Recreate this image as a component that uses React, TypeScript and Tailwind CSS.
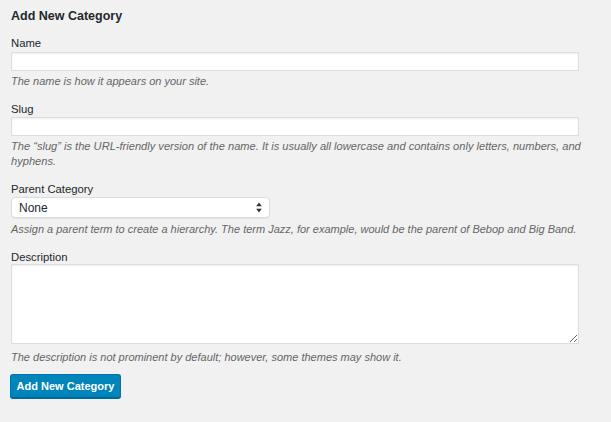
import React from "react";

const App: React.FC = () => {
  return (
    <div className="min-h-[422px] w-[611px] bg-[#f1f1f1] px-[11px] pt-[9px] font-['Liberation_Sans',Arial,sans-serif] text-[#23282d]">
      {/* Título */}
      <h2 className="text-[12.5px] font-bold leading-[14px]">Add New Category</h2>

      {/* Nombre */}
      <div className="mt-[13px]">
        <label className="block text-[11.3px] leading-[15px]">Name</label>
        <input type="text" className="mt-[1px] block h-[19px] w-[568px] border border-[#dddddd] bg-white shadow-[inset_0_1px_2px_rgba(0,0,0,0.07)] outline-none" />
        <p className="mt-[3px] text-[11px] italic leading-[14px] text-[#666666]">The name is how it appears on your site.</p>
      </div>

      {/* Slug */}
      <div className="mt-[14px]">
        <label className="block text-[11.3px] leading-[15px]">Slug</label>
        <input type="text" className="mt-[0px] block h-[19px] w-[568px] border border-[#dddddd] bg-white shadow-[inset_0_1px_2px_rgba(0,0,0,0.07)] outline-none" />
        <p className="mt-[3px] w-[585px] text-[11.1px] italic leading-[14.5px] text-[#666666]">
          The “slug” is the URL-friendly version of the name. It is usually all lowercase and contains only letters, numbers, and hyphens.
        </p>
      </div>

      {/* Categoría padre */}
      <div className="mt-[14px]">
        <label className="block text-[11.3px] leading-[15px]">Parent Category</label>
        <div className="mt-[0px] flex h-[21px] w-[259px] items-center justify-between rounded-[4px] border border-[#dcdcdc] bg-white pl-[7px] pr-[7px] shadow-[0_1px_1px_rgba(0,0,0,0.06)]">
          <span className="text-[12px]">None</span>
          <svg width="6" height="11" viewBox="0 0 6 11">
            <path d="M3 0.5 L5.8 4.2 H0.2 Z" fill="#333" />
            <path d="M3 10.5 L5.8 6.8 H0.2 Z" fill="#333" />
          </svg>
        </div>
        <p className="mt-[4px] text-[11px] italic leading-[14px] text-[#666666]">
          Assign a parent term to create a hierarchy. The term Jazz, for example, would be the parent of Bebop and Big Band.
        </p>
      </div>

      {/* Descripción */}
      <div className="mt-[14px]">
        <label className="block text-[11.3px] leading-[15px]">Description</label>
        <textarea className="-mt-[1px] block h-[80px] w-[568px] resize border border-[#dddddd] bg-white shadow-[inset_0_1px_2px_rgba(0,0,0,0.07)] outline-none"></textarea>
        <p className="mt-[6px] text-[11px] italic leading-[14px] text-[#666666]">
          The description is not prominent by default; however, some themes may show it.
        </p>
      </div>

      <button
        type="button"
        className="-ml-[1px] mt-[10px] h-[24px] w-[111px] rounded-[3px] border border-[#0073aa] border-b-[#006799] bg-[#0085ba] text-[11px] font-bold text-white shadow-[0_1px_0_#006799]"
      >
        Add New Category
      </button>
    </div>
  );
};

export default App;
